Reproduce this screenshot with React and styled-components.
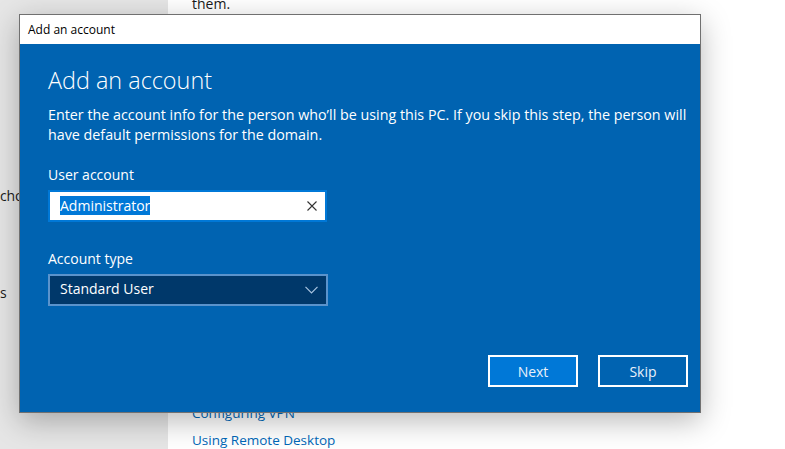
import React from "react";
import styled, { createGlobalStyle } from "styled-components";

const Global = createGlobalStyle`
  html, body { margin: 0; padding: 0; }
  body {
    width: 785px;
    height: 449px;
    overflow: hidden;
    font-family: "Open Sans", "Noto Sans", "DejaVu Sans", sans-serif;
    background: #ffffff;
  }
  #root { width: 785px; height: 449px; }
`;

const Page = styled.div`
  position: relative;
  display: flex;
  width: 785px;
  height: 449px;
  overflow: hidden;
`;

const Sidebar = styled.nav`
  width: 168px;
  flex: none;
  background: #e6e6e6;
  display: flex;
  flex-direction: column;
  padding-top: 186px;
  gap: 78px;
  box-sizing: border-box;
`;

const SideItem = styled.div`
  font-size: 14px;
  color: #1a1a1a;
  white-space: nowrap;
  letter-spacing: -0.1px;
`;

const Content = styled.main`
  flex: 1;
  background: #ffffff;
  padding-left: 24px;
  display: flex;
  flex-direction: column;
`;

const Para = styled.p`
  margin: -6px 0 0;
  font-size: 14px;
  line-height: 20px;
  color: #1a1a1a;
`;

const Links = styled.div`
  margin-top: auto;
  display: flex;
  flex-direction: column;
  gap: 7px;
  margin-bottom: -1px;
`;

const Link = styled.a`
  font-size: 13.5px;
  line-height: 20px;
  color: #0067b8;
  text-decoration: none;
`;

const Dialog = styled.section`
  position: absolute;
  left: 19px;
  top: 14px;
  width: 682px;
  height: 399px;
  box-sizing: border-box;
  border: 1px solid #707070;
  background: #0063b1;
  display: flex;
  flex-direction: column;
  box-shadow: 0 8px 28px rgba(0, 0, 0, 0.28);
`;

const TitleBar = styled.header`
  height: 29px;
  flex: none;
  background: #ffffff;
  display: flex;
  align-items: center;
  padding-left: 8px;
  font-size: 12px;
  color: #000000;
`;

const Body = styled.div`
  flex: 1;
  display: flex;
  flex-direction: column;
  padding: 20px 12px 25px 28px;
  color: #ffffff;
`;

const Heading = styled.h1`
  margin: 0;
  font-size: 23.4px;
  font-weight: 300;
  line-height: 32px;
`;

const Desc = styled.p`
  margin: 9px 0 0;
  font-size: 14.3px;
  line-height: 20px;
`;

const Label = styled.div`
  font-size: 14px;
  line-height: 20px;
  margin-top: ${(p) => p.$mt}px;
  margin-bottom: 5px;
`;

const InputBox = styled.div`
  width: 279px;
  height: 32px;
  box-sizing: border-box;
  border: 2px solid #0078d7;
  background: #ffffff;
  display: flex;
  align-items: center;
  padding: 0 8px 0 10px;
`;

const Selected = styled.span`
  background: #0078d7;
  color: #ffffff;
  font-size: 14px;
  line-height: 19px;
  margin-top: -2px;
`;

const ClearBtn = styled.span`
  margin-left: auto;
  display: flex;
  align-items: center;
`;

const SelectBox = styled.div`
  width: 280px;
  height: 32px;
  box-sizing: border-box;
  border: 2px solid #5a93cc;
  background: #00386a;
  display: flex;
  align-items: center;
  padding: 0 8px 3px 10px;
  font-size: 14px;
  color: #ffffff;
`;

const Chevron = styled.span`
  margin-left: auto;
  margin-top: 2px;
  display: flex;
`;

const Footer = styled.div`
  margin-top: auto;
  display: flex;
  justify-content: flex-end;
  gap: 20px;
`;

const Button = styled.button`
  width: 90px;
  height: 32px;
  box-sizing: border-box;
  border: 2px solid #ffffff;
  background: ${(p) => (p.$primary ? "#0078d7" : "transparent")};
  color: #e8f1fa;
  font-family: inherit;
  font-size: 14px;
  padding: 0;
`;

export default function App() {
  return (
    <>
      <Global />
      <Page>
        <Sidebar>
          <SideItem>chool</SideItem>
          <SideItem>s</SideItem>
        </Sidebar>
        <Content>
          <Para>them.</Para>
          <Links>
            <Link>Configuring VPN</Link>
            <Link>Using Remote Desktop</Link>
          </Links>
        </Content>
        <Dialog>
          <TitleBar>Add an account</TitleBar>
          <Body>
            <Heading>Add an account</Heading>
            <Desc>
              Enter the account info for the person who’ll be using this PC. If you skip this step, the person will have default permissions for the domain.
            </Desc>
            <Label $mt={20}>User account</Label>
            <InputBox>
              <Selected>Administrator</Selected>
              <ClearBtn>
                <svg width="10" height="10" viewBox="0 0 10 10">
                  <path d="M0.5 0.5 L9.5 9.5 M9.5 0.5 L0.5 9.5" stroke="#333" strokeWidth="1.1" fill="none" />
                </svg>
              </ClearBtn>
            </InputBox>
            <Label $mt={27}>Account type</Label>
            <SelectBox>
              Standard User
              <Chevron>
                <svg width="13" height="8" viewBox="0 0 13 8">
                  <path d="M0.5 0.8 L6.5 6.8 L12.5 0.8" stroke="#a9c4e0" strokeWidth="1.2" fill="none" />
                </svg>
              </Chevron>
            </SelectBox>
            <Footer>
              <Button $primary>Next</Button>
              <Button>Skip</Button>
            </Footer>
          </Body>
        </Dialog>
      </Page>
    </>
  );
}
